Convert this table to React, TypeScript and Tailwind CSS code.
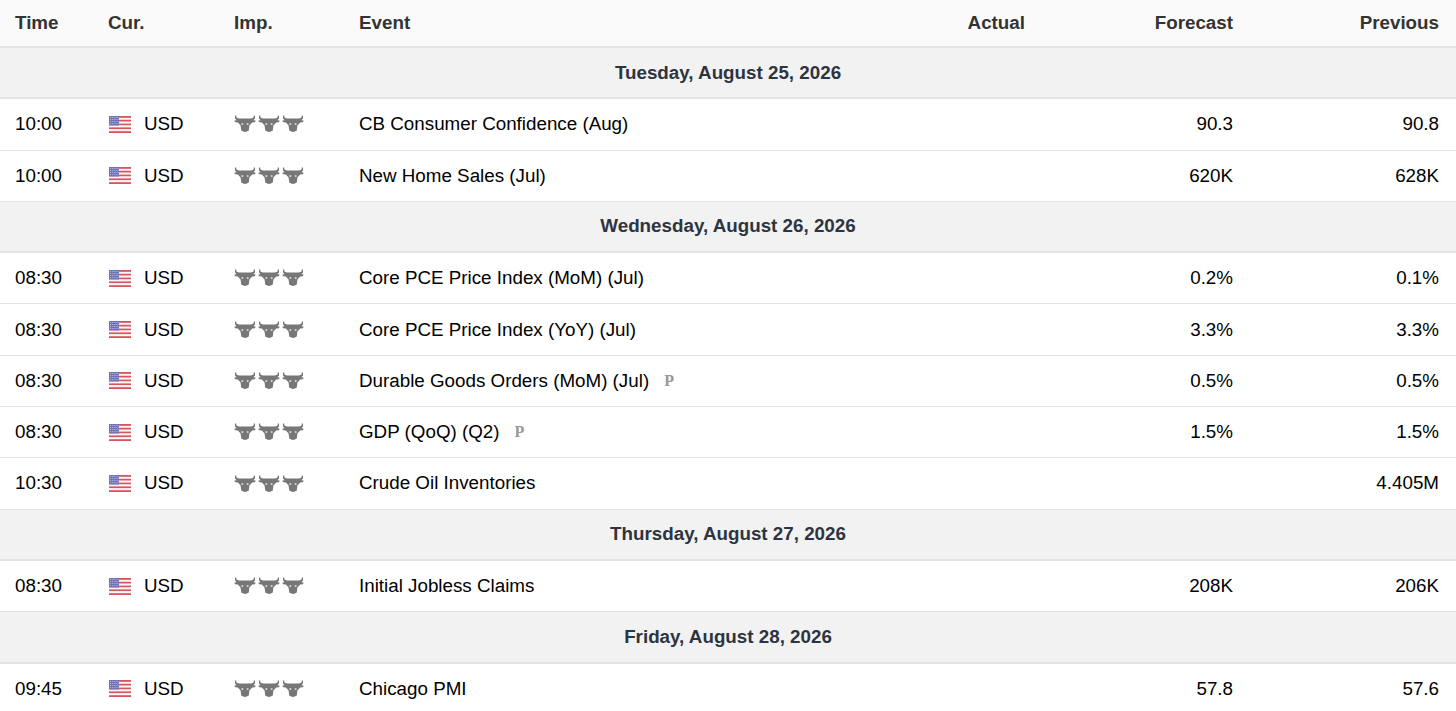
const rows: (
  | { date: string }
  | { time: string; event: string; prelim?: boolean; actual?: string; forecast: string; previous: string }
)[] = [
  { date: "Tuesday, August 25, 2026" },
  { time: "10:00", event: "CB Consumer Confidence (Aug)", forecast: "90.3", previous: "90.8" },
  { time: "10:00", event: "New Home Sales (Jul)", forecast: "620K", previous: "628K" },
  { date: "Wednesday, August 26, 2026" },
  { time: "08:30", event: "Core PCE Price Index (MoM) (Jul)", forecast: "0.2%", previous: "0.1%" },
  { time: "08:30", event: "Core PCE Price Index (YoY) (Jul)", forecast: "3.3%", previous: "3.3%" },
  { time: "08:30", event: "Durable Goods Orders (MoM) (Jul)", prelim: true, forecast: "0.5%", previous: "0.5%" },
  { time: "08:30", event: "GDP (QoQ) (Q2)", prelim: true, forecast: "1.5%", previous: "1.5%" },
  { time: "10:30", event: "Crude Oil Inventories", forecast: "", previous: "4.405M" },
  { date: "Thursday, August 27, 2026" },
  { time: "08:30", event: "Initial Jobless Claims", forecast: "208K", previous: "206K" },
  { date: "Friday, August 28, 2026" },
  { time: "09:45", event: "Chicago PMI", forecast: "57.8", previous: "57.6" },
];

const cols = "grid grid-cols-[108px_126px_125px_541px_140px_208px_1fr] items-center";

function Flag() {
  return (
    <svg width="22" height="17" viewBox="0 0 22 17" className="shrink-0">
      {Array.from({ length: 9 }).map((_, i) => (
        <rect key={i} x="0" y={i * 1.9} width="22" height="1.9" fill={i % 2 === 0 ? "#d9545f" : "#f4f4f4"} />
      ))}
      <rect x="0" y="0" width="10" height="9.5" fill="#6f72b8" />
      {Array.from({ length: 4 }).map((_, r) =>
        Array.from({ length: 5 }).map((_, c) => (
          <rect key={`${r}-${c}`} x={1 + c * 1.9} y={1 + r * 2.1} width="0.8" height="0.8" fill="#dcdcf0" />
        ))
      )}
    </svg>
  );
}

function Bull() {
  return (
    <svg width="22" height="18" viewBox="0 0 22 18" className="shrink-0">
      <path
        fill="#777"
        d="M1 0.5 L2.2 0.5 L2.4 2.6 L5 3.6 L17 3.6 L19.6 2.6 L19.8 0.5 L21 0.5 L21 3.6 L19.4 5.2 L21.6 5.6 L21 7.2 L18.2 7.6 L15.4 10.4 L14.8 15.6 Q11 18.2 7.2 15.6 L6.6 10.4 L3.8 7.6 L1 7.2 L0.4 5.6 L2.6 5.2 L1 3.6 Z"
      />
      <circle cx="8.3" cy="9" r="1" fill="#d8d8d8" />
      <circle cx="13.7" cy="9" r="1" fill="#d8d8d8" />
    </svg>
  );
}

export default function App() {
  return (
    <div className="w-[1456px] bg-white text-[18.8px] text-black [font-family:'Liberation_Sans',Arial,sans-serif]">
      <div className={`${cols} h-[48px] border-b-2 border-[#e3e3e3] bg-[#fafafa] font-bold text-[#333]`}>
        <div className="pl-[15px]">Time</div>
        <div>Cur.</div>
        <div>Imp.</div>
        <div>Event</div>
        <div className="pr-[15px] text-right">Actual</div>
        <div className="pr-[15px] text-right">Forecast</div>
        <div className="pr-[17px] text-right">Previous</div>
      </div>
      {rows.map((r, i) =>
        "date" in r ? (
          <div
            key={i}
            className="flex h-[51.3px] items-center justify-center border-b-2 border-[#e3e3e3] bg-[#f2f2f2] font-bold text-[#2d3440]"
          >
            {r.date}
          </div>
        ) : (
          <div key={i} className={`${cols} h-[51.3px] border-b border-[#e3e3e3]`}>
            <div className="pl-[15px]">{r.time}</div>
            <div className="flex items-center gap-[13px] pl-[1px]">
              <Flag />
              <span>USD</span>
            </div>
            <div className="flex items-center gap-[2px]">
              <Bull />
              <Bull />
              <Bull />
            </div>
            <div className="flex items-center">
              <span>{r.event}</span>
              {r.prelim && (
                <span className="ml-[15px] text-[16px] font-bold text-[#999] [font-family:'Liberation_Serif',serif]">
                  P
                </span>
              )}
            </div>
            <div className="pr-[15px] text-right">{r.actual ?? ""}</div>
            <div className="pr-[15px] text-right">{r.forecast}</div>
            <div className="pr-[17px] text-right">{r.previous}</div>
          </div>
        )
      )}
    </div>
  );
}
